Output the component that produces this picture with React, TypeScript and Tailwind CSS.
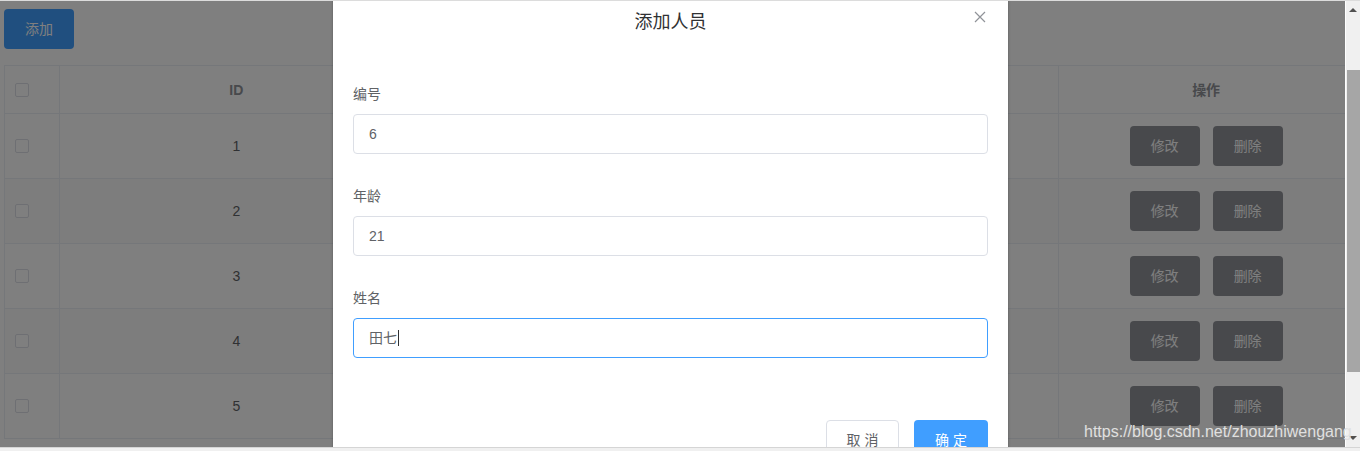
const rows = [
  { id: 1, age: 20, name: "张三" },
  { id: 2, age: 22, name: "李四" },
  { id: 3, age: 23, name: "王五" },
  { id: 4, age: 24, name: "赵六" },
  { id: 5, age: 25, name: "孙八" },
];

function Checkbox() {
  return <span className="block h-[14px] w-[14px] rounded-[2px] border border-[#dcdfe6] bg-white" />;
}

function Field({ label, value, focused }: { label: string; value: string; focused?: boolean }) {
  return (
    <div className="mb-[22px]">
      <div className="text-sm leading-[40px] text-[#606266]">{label}</div>
      <div
        className={
          focused
            ? "flex h-10 items-center rounded-[4px] border border-[#409eff] px-[15px] text-sm text-[#606266]"
            : "flex h-10 items-center rounded-[4px] border border-[#dcdfe6] px-[15px] text-sm text-[#606266]"
        }
      >
        <span>{value}</span>
        {focused ? <span className="ml-px h-[16px] w-px bg-[#303133]" /> : null}
      </div>
    </div>
  );
}

function ScrollArrow({ down }: { down?: boolean }) {
  return (
    <div className="flex h-[17px] items-center justify-center">
      <svg width="8" height="5" viewBox="0 0 8 5">
        {down ? <polygon points="0,0 8,0 4,4" fill="#505050" /> : <polygon points="0,5 8,5 4,1" fill="#505050" />}
      </svg>
    </div>
  );
}

export default function App() {
  return (
    <div className="relative h-[451px] w-[1360px] overflow-hidden bg-white font-['Liberation_Sans','Noto_Sans_CJK_SC',sans-serif]">
      <div className="flex h-[447px] border-t border-[#dcdcdc]">
        <div className="relative w-[1345px] shrink-0 overflow-hidden">
          {/* page */}
          <div className="px-[4px] pt-[8px]">
            <button className="h-10 w-[70px] rounded-[4px] bg-[#409eff] text-sm text-white">添加</button>
            <div className="mt-[16px] w-[1350px] border-l border-t border-[#ebeef5] text-sm">
              <div className="flex h-[48px] border-b border-[#ebeef5] font-bold text-[#909399]">
                <div className="flex w-[55px] items-center border-r border-[#ebeef5] pl-[10px]">
                  <Checkbox />
                </div>
                <div className="flex w-[354px] items-center justify-center border-r border-[#ebeef5]">ID</div>
                <div className="flex w-[323px] items-center justify-center border-r border-[#ebeef5]">年龄</div>
                <div className="flex w-[323px] items-center justify-center border-r border-[#ebeef5]">姓名</div>
                <div className="flex w-[295px] items-center justify-center border-r border-[#ebeef5]">操作</div>
              </div>
              {rows.map((r, i) => (
                <div
                  key={r.id}
                  className={
                    i % 2 === 1
                      ? "flex h-[65px] border-b border-[#ebeef5] bg-[#fafafa] text-[#606266]"
                      : "flex h-[65px] border-b border-[#ebeef5] text-[#606266]"
                  }
                >
                  <div className="flex w-[55px] items-center border-r border-[#ebeef5] pl-[10px]">
                    <Checkbox />
                  </div>
                  <div className="flex w-[354px] items-center justify-center border-r border-[#ebeef5]">{r.id}</div>
                  <div className="flex w-[323px] items-center justify-center border-r border-[#ebeef5]">{r.age}</div>
                  <div className="flex w-[323px] items-center justify-center border-r border-[#ebeef5]">{r.name}</div>
                  <div className="flex w-[295px] items-center justify-center gap-[13px] border-r border-[#ebeef5]">
                    <button className="h-10 w-[70px] rounded-[4px] bg-[#909399] text-sm text-white">修改</button>
                    <button className="h-10 w-[70px] rounded-[4px] bg-[#909399] text-sm text-white">删除</button>
                  </div>
                </div>
              ))}
            </div>
          </div>

          {/* modal mask */}
          <div className="absolute inset-0 bg-black/50" />

          {/* dialog */}
          <div className="absolute left-[333px] top-[-11px] w-[675px] rounded-[2px] bg-white shadow-[0_1px_3px_rgba(0,0,0,0.3)]">
            <div className="relative px-5 pb-[10px] pt-5">
              <div className="text-center text-[18px] leading-6 text-[#303133]">添加人员</div>
              <svg className="absolute left-[641px] top-[21px]" width="12" height="12" viewBox="0 0 12 12">
                <path d="M1 1L11 11M11 1L1 11" stroke="#909399" strokeWidth="1.2" fill="none" />
              </svg>
            </div>
            <div className="px-5 py-[30px]">
              <Field label="编号" value="6" />
              <Field label="年龄" value="21" />
              <Field label="姓名" value="田七" focused />
            </div>
            <div className="flex justify-end gap-[15px] px-5 pb-5 pt-[10px]">
              <button className="h-10 w-[73px] rounded-[4px] border border-[#dcdfe6] bg-white text-sm text-[#606266]">
                取 消
              </button>
              <button className="h-10 w-[74px] rounded-[4px] bg-[#409eff] text-sm text-white">确 定</button>
            </div>
          </div>
        </div>

        {/* browser scrollbar */}
        <div className="ml-px flex w-[14px] flex-col bg-[#f0f0f0]">
          <ScrollArrow />
          <div className="flex-1">
            <div className="ml-px mt-[52px] h-[302px] w-[13px] bg-[#a6a6a6]" />
          </div>
          <ScrollArrow down />
        </div>
      </div>
      <div className="h-[4px] border-t border-[#d5d5d5] bg-[#f0f0f0]" />

      {/* watermark */}
      <div className="absolute left-[1084px] top-[423px] whitespace-nowrap text-[16px] leading-[18px] text-[#e0e0e0]">
        https://blog.csdn.net/zhouzhiwengang
      </div>
    </div>
  );
}
